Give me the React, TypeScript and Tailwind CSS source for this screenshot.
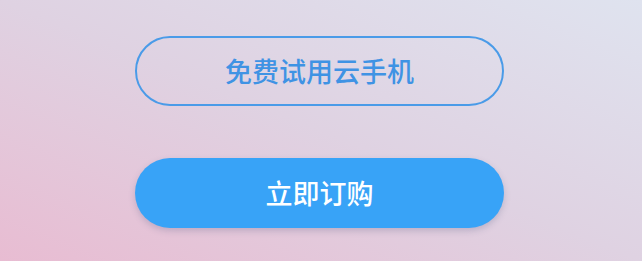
import React from 'react';

export default function App() {
  return (
    <div
      className="w-[642px] h-[261px] overflow-hidden relative bg-gradient-to-tr from-[#e8bcd2] via-[#dfd2e2] to-[#dfe3ef]"
      style={{ fontFamily: '"Noto Sans CJK SC", "Noto Sans", sans-serif' }}
    >
      <div className="flex flex-col items-start pl-[135px] pt-[36px] gap-[52px]">
        <button
          type="button"
          className="w-[369px] h-[70px] rounded-full border-2 border-[#4a9be8] text-[#3f93e4] text-[27px] font-medium flex items-center justify-center"
        >
          免费试用云手机
        </button>
        <button
          type="button"
          className="w-[369px] h-[70px] rounded-full bg-[#38a3f7] text-white text-[27px] font-medium flex items-center justify-center shadow-[0_3px_6px_rgba(80,90,130,0.25)]"
        >
          立即订购
        </button>
      </div>
    </div>
  );
}
